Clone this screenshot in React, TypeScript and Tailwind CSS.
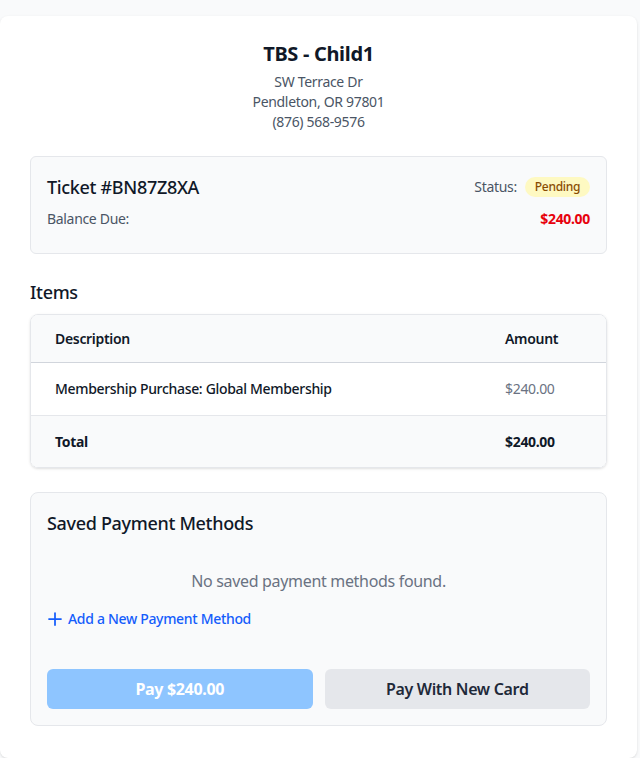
import React from 'react';

interface LineItem {
  description: string;
  amount: string;
}

const items: LineItem[] = [
  { description: 'Membership Purchase: Global Membership', amount: '$240.00' },
];

const PlusIcon = () => (
  <svg width="14" height="14" viewBox="0 0 14 14" fill="none" stroke="currentColor" strokeWidth="1.75" strokeLinecap="round">
    <path d="M7 1v12M1 7h12" />
  </svg>
);

const App: React.FC = () => {
  return (
    <div
      className="min-h-screen bg-gray-50 pt-4 tracking-[-0.02em]"
      style={{ fontFamily: '"Noto Sans", "Open Sans", sans-serif' }}
    >
      <div className="mr-[3px] rounded-lg bg-white px-[30px] pt-6 pb-8 shadow">
        {/* location header */}
        <div className="mb-6 text-center">
          <h1 className="mb-1 text-xl leading-7 font-bold text-gray-900">TBS - Child1</h1>
          <p className="text-sm text-gray-600">SW Terrace Dr</p>
          <p className="text-sm text-gray-600">Pendleton, OR 97801</p>
          <p className="text-sm text-gray-600">(876) 568-9576</p>
        </div>

        {/* ticket summary */}
        <div className="rounded-md border border-gray-200 bg-gray-50 px-4 pt-4 pb-6">
          <div className="flex items-center justify-between">
            <h2 className="text-lg font-medium text-gray-900">Ticket #BN87Z8XA</h2>
            <div className="flex items-center gap-2">
              <span className="text-sm text-gray-600">Status:</span>
              <span className="rounded-full bg-yellow-100 px-2.5 py-0.5 text-xs font-medium text-yellow-800">
                Pending
              </span>
            </div>
          </div>
          <div className="mt-2 flex items-center justify-between">
            <span className="text-sm text-gray-600">Balance Due:</span>
            <span className="text-sm font-bold text-red-600">$240.00</span>
          </div>
        </div>

        {/* items */}
        <h2 className="mt-6 mb-2 text-lg font-medium text-gray-900">Items</h2>
        <div className="overflow-hidden rounded-lg border border-gray-200 shadow-sm">
          <table className="w-full text-left">
            <thead className="bg-gray-50">
              <tr className="border-b border-gray-300">
                <th className="px-6 py-[13.5px] text-sm font-semibold text-gray-900">Description</th>
                <th className="w-[125px] px-6 py-[13.5px] text-sm font-semibold text-gray-900">Amount</th>
              </tr>
            </thead>
            <tbody className="bg-white">
              {items.map((item, index) => (
                <tr key={index}>
                  <td className="px-6 py-4 text-sm font-medium text-gray-900">{item.description}</td>
                  <td className="px-6 py-4 text-sm text-gray-500">{item.amount}</td>
                </tr>
              ))}
              <tr className="border-t border-gray-200 bg-gray-50">
                <td className="px-6 py-[15.5px] text-sm font-bold text-gray-900">Total</td>
                <td className="px-6 py-[15.5px] text-sm font-bold text-gray-900">$240.00</td>
              </tr>
            </tbody>
          </table>
        </div>

        {/* payment methods */}
        <div className="mt-6 rounded-lg border border-gray-200 bg-gray-50 p-4">
          <h2 className="mb-4 text-lg font-medium text-gray-900">Saved Payment Methods</h2>
          <p className="py-4 text-center text-base text-gray-500">No saved payment methods found.</p>
          <button className="ml-px flex items-center gap-1.5 text-sm font-medium text-blue-600">
            <PlusIcon />
            Add a New Payment Method
          </button>
          <div className="mt-10 grid grid-cols-2 gap-3">
            <button className="rounded-md bg-blue-300 py-2 text-base font-bold text-white">
              Pay $240.00
            </button>
            <button className="rounded-md bg-gray-200 py-2 text-base font-semibold text-gray-800">
              Pay With New Card
            </button>
          </div>
        </div>
      </div>
    </div>
  );
};

export default App;
